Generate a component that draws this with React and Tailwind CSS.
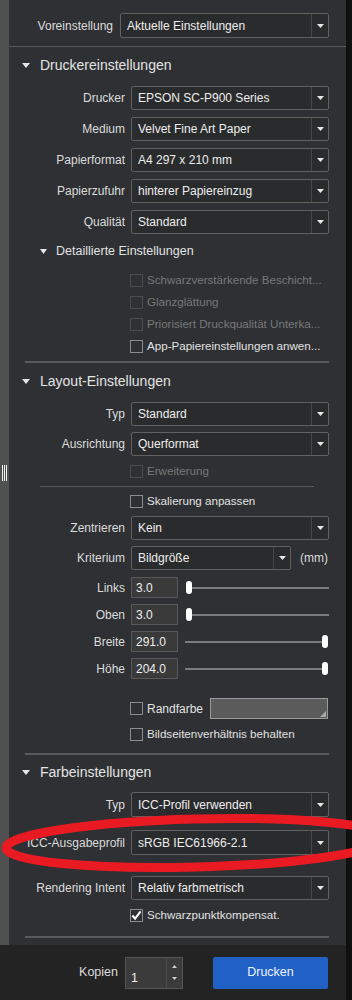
import React from "react";

/* ---------------- small pieces ---------------- */
function Caret({ className = "" }) {
  return (
    <svg width="8" height="5" viewBox="0 0 8 5" className={className}>
      <polygon points="0,0 8,0 4,5" fill="#e6e6e6" />
    </svg>
  );
}

function Select({ value, className = "", h = "h-[24px]" }) {
  return (
    <div
      className={`flex items-center border border-[#616161] bg-[#2a2b2d] rounded-[2px] ${h} ${className}`}
    >
      <span className="flex-1 pl-[6px] text-[12px] text-[#eeeeee] truncate">{value}</span>
      <div className="w-[17px] h-full border-l border-[#454648] flex items-center justify-center">
        <svg width="7" height="4" viewBox="0 0 7 4">
          <polygon points="0,0 7,0 3.5,4" fill="#e8e8e8" />
        </svg>
      </div>
    </div>
  );
}

function Row({ label, children, labelW = "w-[116px]", gap = "ml-[6px]", h = "h-[24px]", className = "" }) {
  return (
    <div className={`flex items-center ${h} mr-[17px] ${className}`}>
      <div className={`${labelW} text-right text-[12px] text-[#dcdcdc] shrink-0 whitespace-nowrap`}>
        {label}
      </div>
      <div className={`flex-1 flex items-center h-full ${gap}`}>{children}</div>
    </div>
  );
}

function Check({ label, disabled, checked, className = "" }) {
  return (
    <div className={`flex items-center h-[22px] pl-[121px] ${className}`}>
      <div
        className={`w-[13px] h-[13px] border shrink-0 flex items-center justify-center ${
          disabled ? "border-[#4b4c4e]" : "border-[#8c8c8c]"
        }`}
      >
        {checked && (
          <svg width="12" height="11" viewBox="0 0 12 11">
            <path d="M1.5 5.5 L4.5 9 L10.5 1" stroke="#ffffff" strokeWidth="2.2" fill="none" />
          </svg>
        )}
      </div>
      <span
        className={`ml-[4px] text-[11.6px] whitespace-nowrap ${
          disabled ? "text-[#777879]" : "text-[#e2e2e2]"
        }`}
      >
        {label}
      </span>
    </div>
  );
}

function Header({ title, h = "h-[36px]" }) {
  return (
    <div className={`flex items-center ${h} pl-[13px]`}>
      <Caret />
      <span className="ml-[10px] text-[14px] text-[#e4e4e4]">{title}</span>
    </div>
  );
}

function Divider({ className = "" }) {
  return <div className={`h-[2px] bg-[#58595b] ml-[16px] mr-[17px] ${className}`} />;
}

function SliderRow({ label, value, right, className = "" }) {
  return (
    <Row label={label} h="h-[21px]" className={className}>
      <div className="w-[47px] h-full bg-[#3a3a3b] border border-[#58585a] flex items-center pl-[4px] text-[12px] text-[#eeeeee]">
        {value}
      </div>
      <div className="flex-1 flex items-center ml-[7px]">
        {!right && <div className="w-[6px] h-[13px] bg-white rounded-[3px] ml-[1px]" />}
        <div className="flex-1 h-[2px] bg-[#7b7c7d]" />
        {right && <div className="w-[6px] h-[13px] bg-white rounded-[3px] mr-[1px]" />}
      </div>
    </Row>
  );
}

/* ---------------- page ---------------- */
export default function App() {
  return (
    <div className="relative w-[352px] h-[1000px] bg-[#101010] overflow-hidden font-['Liberation_Sans',Arial,sans-serif]">
      <div className="w-[346px] h-full flex flex-col">
        <div className="flex flex-1">
          {/* left grip strip */}
          <div className="w-[9px] bg-[#505050] flex items-center justify-center">
            <div className="flex gap-[1px] h-[16px]">
              <div className="w-[1px] h-full bg-[#f0f0f0]" />
              <div className="w-[1px] h-full bg-[#f0f0f0]" />
              <div className="w-[1px] h-full bg-[#f0f0f0]" />
            </div>
          </div>

          {/* main panel */}
          <div className="flex-1 bg-[#2e3033] flex flex-col">
            <div className="pt-[13px] pb-[8px]">
              <Row label="Voreinstellung" labelW="w-[104px]" gap="ml-[7px]" h="h-[25px]">
                <Select value="Aktuelle Einstellungen" className="flex-1" h="h-[25px]" />
              </Row>
            </div>
            <div className="h-[1px] bg-[#58595b]" />

            {/* Druckereinstellungen */}
            <Header title="Druckereinstellungen" />
            <div className="flex flex-col gap-[7px] mt-[3px]">
              <Row label="Drucker"><Select value="EPSON SC-P900 Series" className="flex-1" /></Row>
              <Row label="Medium"><Select value="Velvet Fine Art Paper" className="flex-1" /></Row>
              <Row label="Papierformat"><Select value="A4 297 x 210 mm" className="flex-1" /></Row>
              <Row label="Papierzufuhr"><Select value="hinterer Papiereinzug" className="flex-1" /></Row>
              <Row label="Qualität"><Select value="Standard" className="flex-1" /></Row>
            </div>

            <div className="flex items-center h-[22px] mt-[6px] pl-[31px]">
              <svg width="7" height="5" viewBox="0 0 7 5">
                <polygon points="0,0 7,0 3.5,5" fill="#e6e6e6" />
              </svg>
              <span className="ml-[9px] text-[12.5px] text-[#e2e2e2]">Detaillierte Einstellungen</span>
            </div>

            <div className="mt-[7px]">
              <Check label="Schwarzverstärkende Beschicht..." disabled />
              <Check label="Glanzglättung" disabled />
              <Check label="Priorisiert Druckqualität Unterka..." disabled />
              <Check label="App-Papiereinstellungen anwen..." />
            </div>

            <Divider className="mt-[4px]" />

            {/* Layout-Einstellungen */}
            <Header title="Layout-Einstellungen" />
            <div className="flex flex-col gap-[6px] mt-[3px]">
              <Row label="Typ"><Select value="Standard" className="flex-1" /></Row>
              <Row label="Ausrichtung"><Select value="Querformat" className="flex-1" /></Row>
            </div>
            <Check label="Erweiterung" disabled className="mt-[4px]" />
            <div className="h-[1px] bg-[#58595b] ml-[31px] w-[274px] mt-[4px]" />
            <Check label="Skalierung anpassen" className="mt-[3px]" />

            <Row label="Zentrieren" className="mt-[4px]">
              <Select value="Kein" className="flex-1" />
            </Row>
            <Row label="Kriterium" className="mt-[6px]">
              <Select value="Bildgröße" className="w-[160px]" />
              <span className="ml-[9px] text-[12px] text-[#dcdcdc]">(mm)</span>
            </Row>

            <div className="flex flex-col gap-[6px] mt-[7px]">
              <SliderRow label="Links" value="3.0" />
              <SliderRow label="Oben" value="3.0" />
              <SliderRow label="Breite" value="291.0" right />
              <SliderRow label="Höhe" value="204.0" right />
            </div>

            <div className="flex items-center h-[21px] mt-[19px] pl-[121px] mr-[18px]">
              <div className="w-[13px] h-[13px] border border-[#8c8c8c] shrink-0" />
              <span className="ml-[4px] text-[12px] text-[#e2e2e2]">Randfarbe</span>
              <div className="relative ml-[7px] flex-1 h-full bg-[#5b5b5c] border border-[#9a9a9a]">
                <svg width="6" height="6" viewBox="0 0 6 6" className="absolute right-[1px] bottom-[1px]">
                  <polygon points="6,0 6,6 0,6" fill="#a8a8a8" />
                </svg>
              </div>
            </div>
            <Check label="Bildseitenverhältnis behalten" className="mt-[4px]" />

            <Divider className="mt-[8px]" />

            {/* Farbeinstellungen */}
            <Header title="Farbeinstellungen" h="h-[34px]" />
            <Row label="Typ" h="h-[25px]" className="mt-[3px]">
              <Select value="ICC-Profil verwenden" className="flex-1" h="h-[25px]" />
            </Row>
            <Row label="ICC-Ausgabeprofil" h="h-[25px]" className="mt-[13px]">
              <Select value="sRGB IEC61966-2.1" className="flex-1" h="h-[25px]" />
            </Row>
            <Row label="Rendering Intent" className="mt-[21px]">
              <Select value="Relativ farbmetrisch" className="flex-1" />
            </Row>
            <Check label="Schwarzpunktkompensat." checked className="mt-[4px]" />

            <Divider className="mt-[10px]" />
            <div className="flex-1" />
          </div>
        </div>

        {/* footer */}
        <div className="h-[55px] bg-[#232324] flex items-center justify-end pr-[18px]">
          <span className="text-[12.5px] text-[#dcdcdc] mr-[7px]">Kopien</span>
          <div className="w-[58px] h-[32px] bg-[#3b3b3c] border border-[#555] flex">
            <span className="flex-1 pl-[5px] pt-[11px] text-[12.5px] text-[#eeeeee]">1</span>
            <div className="w-[16px] border-l border-[#4a4a4a] flex flex-col items-center justify-center gap-[9px]">
              <svg width="5" height="3" viewBox="0 0 5 3"><polygon points="0,3 5,3 2.5,0" fill="#d0d0d0" /></svg>
              <svg width="5" height="3" viewBox="0 0 5 3"><polygon points="0,0 5,0 2.5,3" fill="#d0d0d0" /></svg>
            </div>
          </div>
          <button className="ml-[30px] w-[115px] h-[32px] bg-[#2161c6] rounded-[2px] text-[12.5px] text-[#eef3ff]">
            Drucken
          </button>
        </div>
      </div>

      {/* red marker ellipse drawn over the screenshot */}
      <svg
        width="352"
        height="1000"
        viewBox="0 0 352 1000"
        className="absolute left-0 top-0 pointer-events-none"
      >
        <ellipse
          cx="196"
          cy="843"
          rx="190"
          ry="24"
          transform="rotate(-1.5 196 843)"
          fill="none"
          stroke="#ea1a22"
          strokeWidth="9"
        />
      </svg>
    </div>
  );
}
